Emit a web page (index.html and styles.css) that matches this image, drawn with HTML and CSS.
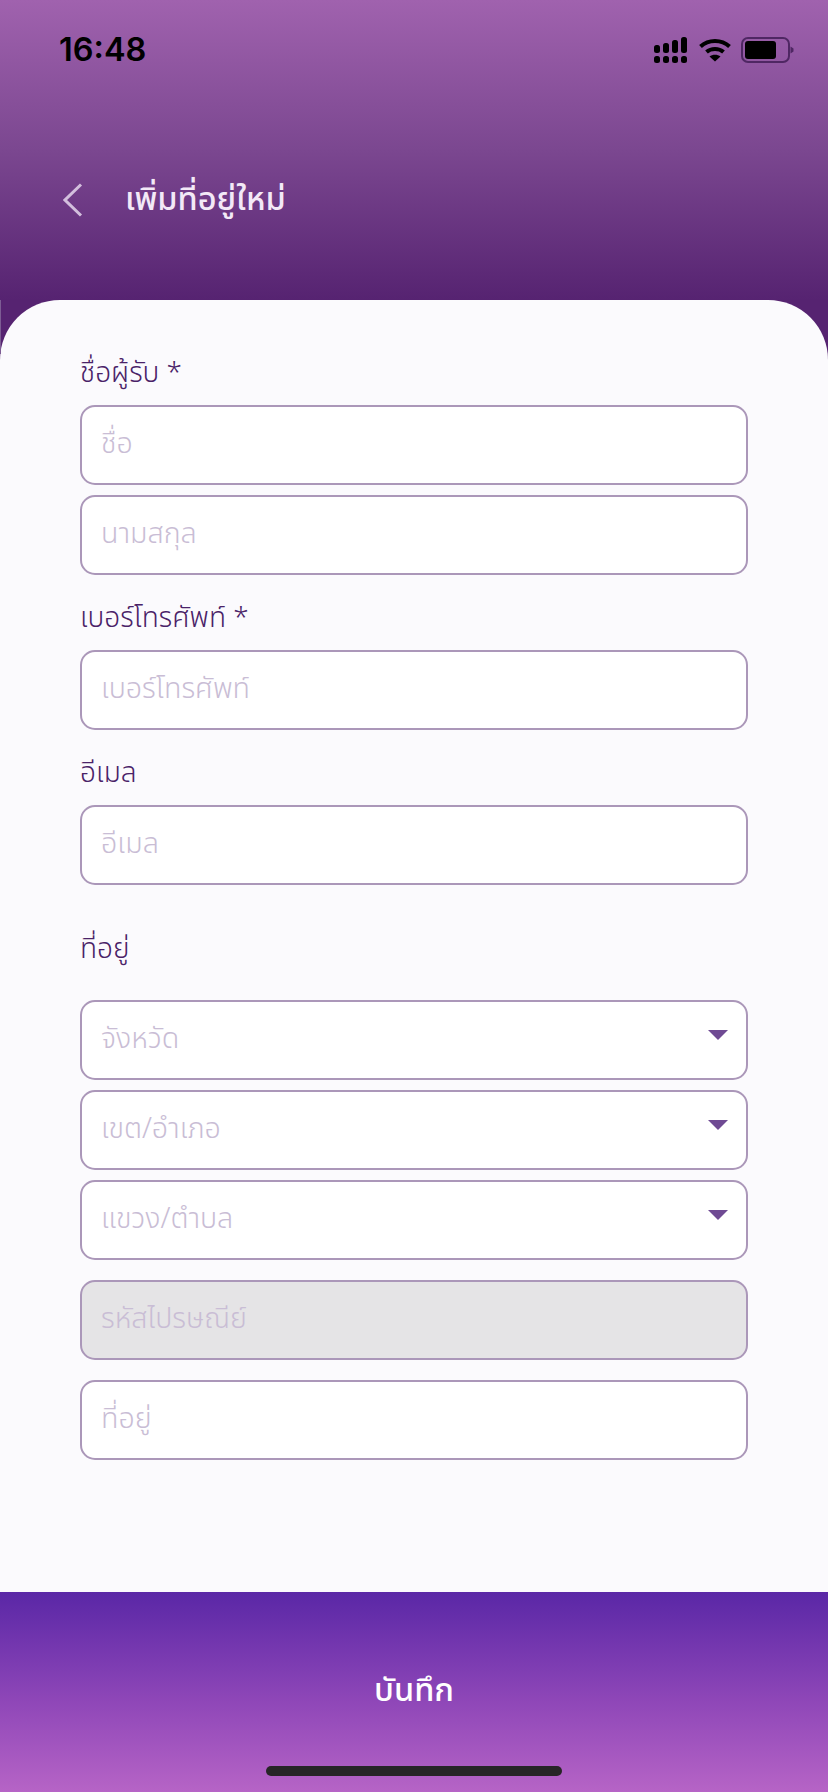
FILE: index.html
```html
<!DOCTYPE html>
<html lang="th">
<head>
<meta charset="utf-8">
<title>เพิ่มที่อยู่ใหม่</title>
<link rel="stylesheet" href="styles.css">
</head>
<body>
<div class="app">
  <header class="top">
    <div class="status">
      <span class="time">16:48</span>
      <div class="status-icons">
        <svg class="signal" width="33" height="26" viewBox="0 0 33 26" fill="#000">
          <rect x="0" y="8" width="6" height="8" rx="2.5"/><rect x="9" y="6" width="6" height="10" rx="2.5"/><rect x="18" y="3" width="6" height="13" rx="2.5"/><rect x="27" y="0" width="6" height="16" rx="2.5"/>
          <rect x="0" y="19" width="6" height="7" rx="2.5"/><rect x="9" y="19" width="6" height="7" rx="2.5"/><rect x="18" y="19" width="6" height="7" rx="2.5"/><rect x="27" y="19" width="6" height="7" rx="2.5"/>
        </svg>
        <svg class="wifi" width="32" height="24" viewBox="0 0 32 24" fill="none" stroke="#000" stroke-width="4">
          <path d="M1.500 8.500C9.500 1 22.500 1 30.500 8.500"/><path d="M7.500 14C12 10 20 10 24.500 14"/><path d="M16 23.500L10.500 18.500C13.500 16 18.500 16 21.500 18.500Z" fill="#000" stroke="none"/>
        </svg>
        <svg class="battery" width="53" height="26" viewBox="0 0 53 26" fill="none">
          <rect x="1" y="1" width="47" height="24" rx="6" stroke="#4f2763" stroke-width="2"/>
          <rect x="4" y="4" width="31" height="18" rx="3" fill="#000"/>
          <path d="M49.500 9.500L52.500 11.500V14.500L49.500 16.500Z" fill="#4f2763"/>
        </svg>
      </div>
    </div>
    <div class="nav">
      <svg class="back" width="20" height="36" viewBox="0 0 20 36" fill="none" stroke="#d3bfdd" stroke-width="3"><path d="M18 2.500L2 18L18 33.500"/></svg>
      <h1 class="title">เพิ่มที่อยู่ใหม่</h1>
    </div>
  </header>
  <div class="edge-line"></div>
  <main class="card">
    <div class="group">
      <div class="label">ชื่อผู้รับ *</div>
      <div class="field"><span class="ph">ชื่อ</span></div>
      <div class="field"><span class="ph">นามสกุล</span></div>
    </div>
    <div class="group">
      <div class="label">เบอร์โทรศัพท์ *</div>
      <div class="field"><span class="ph">เบอร์โทรศัพท์</span></div>
    </div>
    <div class="group">
      <div class="label">อีเมล</div>
      <div class="field"><span class="ph">อีเมล</span></div>
    </div>
    <div class="group address">
      <div class="label address-label">ที่อยู่</div>
      <div class="field select"><span class="ph">จังหวัด</span><i class="caret"></i></div>
      <div class="field select"><span class="ph">เขต/อำเภอ</span><i class="caret"></i></div>
      <div class="field select"><span class="ph">แขวง/ตำบล</span><i class="caret"></i></div>
      <div class="field spaced disabled"><span class="ph">รหัสไปรษณีย์</span></div>
      <div class="field spaced"><span class="ph">ที่อยู่</span></div>
    </div>
  </main>
  <footer class="save">
    <span class="save-text">บันทึก</span>
    <div class="home-bar"></div>
  </footer>
</div>
</body>
</html>
```

FILE: styles.css
```css
* { box-sizing: border-box; }
html, body { margin: 0; padding: 0; }
body { font-family: "Noto Sans Thai", "Noto Sans Thai Looped", "Noto Sans", "DejaVu Sans", "Liberation Sans", sans-serif; }
.app { position: relative; width: 828px; height: 1792px; display: flex; flex-direction: column; background: #562371; overflow: hidden; }
.top { height: 300px; flex: none; padding: 0 34px 0 60px; background: linear-gradient(180deg, #a062ae 0%, #7b4790 50%, #562371 100%); }
.status { height: 100px; display: flex; justify-content: space-between; align-items: flex-start; padding-top: 35px; }
.time { font-family: Inter, "Liberation Sans", sans-serif; font-weight: 600; font-size: 32.5px; line-height: 30px; color: #000; margin-left: -1px; }
.status-icons { display: flex; align-items: center; gap: 10px; padding-top: 2px; }
.signal { margin-right: 2px; }
.nav { display: flex; align-items: center; gap: 42px; margin-top: 82px; height: 36px; padding-left: 3px; }
.back { flex: none; }
.title { margin: 2px 0 0; font-size: 32.5px; font-weight: 500; line-height: 40px; color: #f3e9f7; }
.edge-line { position: absolute; left: 0; top: 300px; width: 1px; height: 54px; background: #7d5c94; }
.card { flex: 1; background: #fbfafd; border-radius: 60px 60px 0 0; padding: 54px 80px 0; display: flex; flex-direction: column; }
.group { display: flex; flex-direction: column; gap: 10px; margin-bottom: 24px; }
.label { font-size: 28px; font-weight: 350; line-height: 40px; color: #4a2268; height: 40px; margin-bottom: 1px; }
.address-label { margin: 21px 0 20px; }
.field { height: 80px; flex: none; border: 2px solid #ab97b9; border-radius: 15px; background: #fff; padding: 0 19px; display: flex; align-items: center; justify-content: space-between; }
.spaced { margin-top: 10px; }
.ph { font-size: 28.6px; font-weight: 300; color: #c9bdd5; line-height: 40px; }
.caret { width: 0; height: 0; border-left: 10px solid transparent; border-right: 10px solid transparent; border-top: 10px solid #6f4a93; margin-right: -1px; transform: translateY(-5px); }
.disabled { background: #e5e4e6; }
.save { height: 200px; flex: none; position: relative; display: flex; justify-content: center; background: linear-gradient(180deg, #5a27a6 0%, #8f47b8 55%, #b664c6 100%); padding-top: 75px; }
.save-text { font-size: 32.5px; font-weight: 550; line-height: 50px; color: #fff; }
.home-bar { position: absolute; left: 266px; bottom: 16px; width: 296px; height: 10px; border-radius: 5px; background: #272527; }
```
